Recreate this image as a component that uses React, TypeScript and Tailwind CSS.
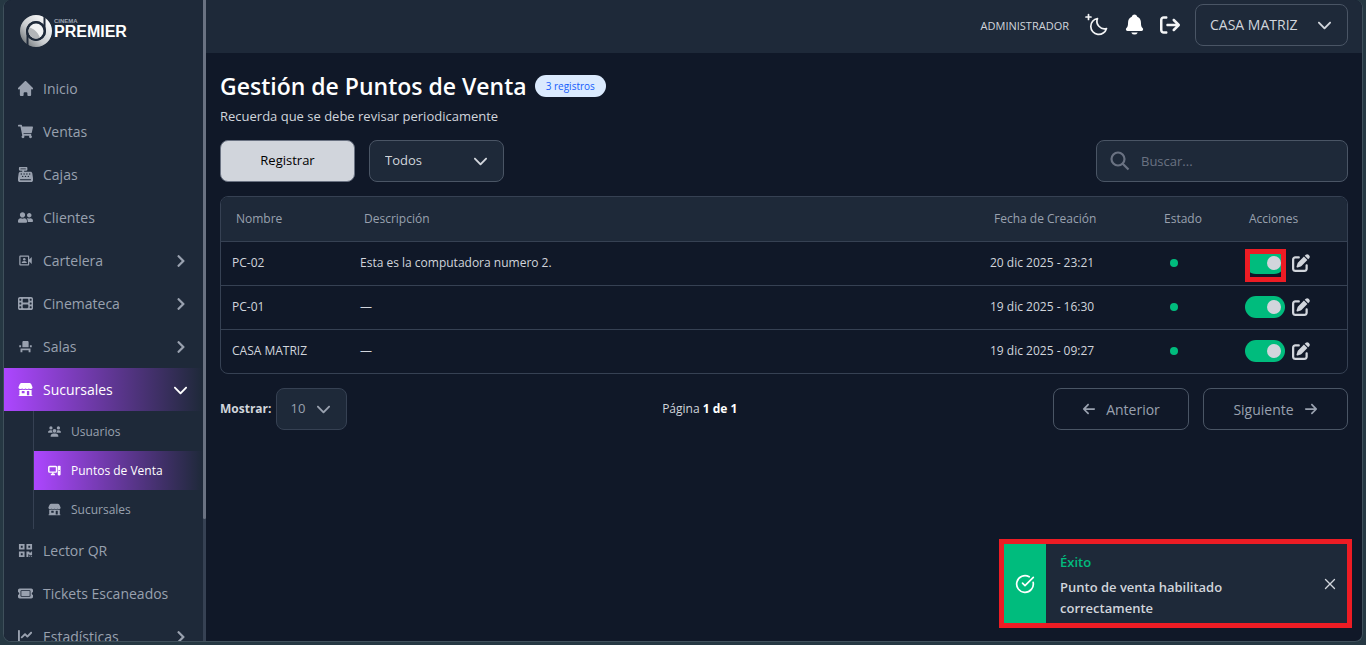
import { useState } from "react"
import type { IconType } from "react-icons"
import { FaArrowLeft, FaArrowRight, FaArrowRightFromBracket, FaCashRegister, FaChartLine, FaChevronDown, FaFilm, FaPenToSquare, FaTicket, FaUsers } from "react-icons/fa6"
import { FaChevronRight, FaQrcode, FaShoppingCart, FaUserFriends } from "react-icons/fa"
import { IoNotifications, IoStorefront } from "react-icons/io5"
import { MdEventSeat, MdOutlineVideoCameraFront } from "react-icons/md"
import { CircleCheckBig, X } from "lucide-react"

type Item = { label: string; icon: IconType; more?: boolean; active?: boolean }

const HomeIcon: IconType = ({ size = 15, className }) => (
  <svg width={size} height={size} viewBox="2 2 16 16" fill="currentColor" className={className}>
    <path d="M10.707 2.293a1 1 0 00-1.414 0l-7 7a1 1 0 001.414 1.414L4 10.414V17a1 1 0 001 1h2a1 1 0 001-1v-2a1 1 0 011-1h2a1 1 0 011 1v2a1 1 0 001 1h2a1 1 0 001-1v-6.586l.293.293a1 1 0 001.414-1.414l-7-7z" />
  </svg>
)

const ComputerIcon: IconType = ({ size = 14, className }) => (
  <svg width={size} height={size} viewBox="0 0 16 16" fill="none" stroke="currentColor" className={className}>
    <rect x="1" y="3" width="9.5" height="7" rx="1" strokeWidth="1.8" />
    <path d="M3.500 13h5M6 10v3" strokeWidth="1.8" />
    <rect x="12" y="2" width="3.5" height="12" rx="1" fill="currentColor" stroke="none" />
    <path d="M13 8h1.500" stroke="#8a40c8" strokeWidth="1" />
  </svg>
)

const topItems: Item[] = [
  { label: "Inicio", icon: HomeIcon },
  { label: "Ventas", icon: FaShoppingCart },
  { label: "Cajas", icon: FaCashRegister },
  { label: "Clientes", icon: FaUserFriends },
  { label: "Cartelera", icon: MdOutlineVideoCameraFront, more: true },
  { label: "Cinemateca", icon: FaFilm, more: true },
  { label: "Salas", icon: MdEventSeat, more: true },
]

const subItems: Item[] = [
  { label: "Usuarios", icon: FaUsers },
  { label: "Puntos de Venta", icon: ComputerIcon, active: true },
  { label: "Sucursales", icon: IoStorefront },
]

const bottomItems: Item[] = [
  { label: "Lector QR", icon: FaQrcode },
  { label: "Tickets Escaneados", icon: FaTicket },
  { label: "Estadísticas", icon: FaChartLine, more: true },
]

const initialRows = [
  { name: "PC-02", description: "Esta es la computadora numero 2.", date: "20 dic 2025 - 23:21", enabled: true, marked: true },
  { name: "PC-01", description: "—", date: "19 dic 2025 - 16:30", enabled: true, marked: false },
  { name: "CASA MATRIZ", description: "—", date: "19 dic 2025 - 09:27", enabled: true, marked: false },
]

const Logo = () => (
  <a href="#" className="ml-4 flex h-8 items-center gap-0.5 text-white">
    <svg width="32" height="32" viewBox="0 0 32 32" aria-hidden="true">
      <defs>
        <linearGradient id="ring" x1="0" y1="1" x2="1" y2="0">
          <stop offset="0" stopColor="#6f7478" />
          <stop offset="0.4" stopColor="#c9cccf" />
          <stop offset="1" stopColor="#ffffff" />
        </linearGradient>
      </defs>
      <circle cx="16" cy="16" r="13" fill="none" stroke="url(#ring)" strokeWidth="6" />
      <path d="M6.500 14v17H8.500V16zM23.500 1v15l2-1V3z" fill="#1e2939" />
      <circle cx="16" cy="16" r="10" fill="#1e2939" />
      <circle cx="16" cy="16" r="7.500" fill="#f1f2f3" />
      <path d="M9.500 12.500c4 1 8 4 10.500 10a7.500 7.500 0 0 1-10.500-10z" fill="#b3b6b9" />
    </svg>
    <span className="flex flex-col pb-1 font-['Liberation_Sans',sans-serif] font-bold">
      <span className="text-[6px] leading-[6px] text-gray-400">CINEMA</span>
      <span className="text-[16px] leading-[16px]">PREMIER</span>
    </span>
  </a>
)

const NavLink = ({ item }: { item: Item }) => {
  const Icon = item.icon
  return (
    <a href="#" className="flex h-[43px] shrink-0 items-center gap-2.5 pl-3.5 pr-[15px] text-[14px] text-gray-400">
      <Icon size={15} />
      <span className="flex-1 whitespace-nowrap">{item.label}</span>
      {item.more && <FaChevronRight size={14} />}
    </a>
  )
}

const Sidebar = () => (
  <aside className="flex w-[202px] shrink-0 overflow-hidden bg-gray-800">
    <div className="flex min-w-0 flex-1 flex-col overflow-hidden pt-[15px]">
      <Logo />
      <nav className="mt-5 flex flex-col">
        {topItems.map((item) => (
          <NavLink key={item.label} item={item} />
        ))}
        <button className="flex h-[43px] shrink-0 items-center gap-2.5 bg-linear-to-r from-purple-500 to-transparent pl-3.5 pr-[15px] text-left text-[14px] text-white">
          <IoStorefront size={15} />
          <span className="flex-1">Sucursales</span>
          <FaChevronDown size={15} />
        </button>
        <div className="ml-[29px] flex flex-col border-l border-gray-700 pt-px">
          {subItems.map(({ label, icon: Icon, active }) => (
            <a
              key={label}
              href="#"
              className={
                active
                  ? "flex h-[39px] items-center gap-2.5 bg-linear-to-r from-purple-500 to-transparent pl-3.5 text-[12px] text-white"
                  : "flex h-[39px] items-center gap-2.5 pl-3.5 text-[12px] text-gray-400"
              }
            >
              <Icon size={13} />
              <span className="whitespace-nowrap">{label}</span>
            </a>
          ))}
        </div>
        {bottomItems.map((item) => (
          <NavLink key={item.label} item={item} />
        ))}
      </nav>
    </div>
    <div className="w-[3px] bg-gray-700">
      <div className="h-[81%] rounded-b bg-gray-500" />
    </div>
  </aside>
)

const MoonIcon = () => (
  <svg width="24" height="24" viewBox="0 0 24 24" fill="none" stroke="currentColor" strokeWidth="1.7" strokeLinecap="round" strokeLinejoin="round">
    <path d="M12.500 5.500a8 8 0 1 0 9 10 7.500 7.500 0 0 1-9-10z" />
    <path d="M3.500 1.500v5M1 4h5" />
  </svg>
)

const Header = () => (
  <header className="flex h-[53px] shrink-0 items-center justify-end bg-gray-800 pb-1 pr-3.5 text-gray-100">
    <span className="pt-1 text-[11px] text-gray-300">ADMINISTRADOR</span>
    <button aria-label="Cambiar tema" className="ml-4">
      <MoonIcon />
    </button>
    <button aria-label="Notificaciones" className="ml-3.5 text-white">
      <IoNotifications size={23} />
    </button>
    <button aria-label="Cerrar sesión" className="ml-3.5">
      <FaArrowRightFromBracket size={20} />
    </button>
    <div className="relative ml-[15px]">
      <select aria-label="Sucursal" className="h-[42px] w-[153px] appearance-none rounded-lg border border-gray-600 bg-gray-800 px-3.5 text-[14px] text-gray-300">
        <option>CASA MATRIZ</option>
      </select>
      <FaChevronDown size={15} className="pointer-events-none absolute right-4 top-[13px] text-gray-300" />
    </div>
  </header>
)

const PointsTable = () => {
  const [rows, setRows] = useState(initialRows)

  const toggle = (name: string) => {
    setRows(rows.map((row) => (row.name === name ? { ...row, enabled: !row.enabled } : row)))
  }

  return (
    <div className="mt-3.5 overflow-hidden rounded-lg border border-gray-700">
      <table className="w-full table-fixed text-left text-[12px] text-gray-300">
        <thead>
          <tr className="h-11 border-b border-gray-700 bg-gray-800 text-gray-400">
            <th className="w-[128px] px-[15px] font-normal">Nombre</th>
            <th className="px-[15px] font-normal">Descripción</th>
            <th className="w-[170px] px-[15px] font-normal">Fecha de Creación</th>
            <th className="w-[85px] px-[15px] font-normal">Estado</th>
            <th className="w-[113px] px-[15px] font-normal">Acciones</th>
          </tr>
        </thead>
        <tbody>
          {rows.map((row) => (
            <tr key={row.name} className="h-11 border-b border-gray-700 last:border-b-0">
              <td className="px-[11px]">{row.name}</td>
              <td className="px-[11px]">{row.description}</td>
              <td className="px-[11px]">{row.date}</td>
              <td className="px-[21px]">
                <span className={row.enabled ? "block size-2 rounded-full bg-emerald-500" : "block size-2 rounded-full bg-gray-500"} />
              </td>
              <td className="px-[11px]">
                <div className="flex items-center gap-[7px]">
                  <div className="relative">
                    <input
                      type="checkbox"
                      aria-label={`Habilitar ${row.name}`}
                      checked={row.enabled}
                      onChange={() => toggle(row.name)}
                      className="block h-[22px] w-10 appearance-none rounded-full bg-gray-600 p-1 before:block before:size-3.5 before:rounded-full before:bg-gray-300 checked:bg-emerald-500 checked:before:ml-[18px]"
                    />
                    {row.marked && <span className="pointer-events-none absolute -top-[3px] left-0 h-[33px] w-[41px] border-5 border-[#ed1c24]" />}
                  </div>
                  <button aria-label={`Editar ${row.name}`}>
                    <FaPenToSquare size={18} />
                  </button>
                </div>
              </td>
            </tr>
          ))}
        </tbody>
      </table>
    </div>
  )
}

const Toast = () => (
  <div role="status" className="absolute bottom-[13px] right-2.5 flex w-[353px] border-5 border-[#ed1c24] bg-gray-800">
    <div className="flex w-[42px] items-center justify-center bg-emerald-500 text-white">
      <CircleCheckBig size={20} />
    </div>
    <div className="flex-1 px-3.5 pt-2 pb-1 text-[13px] leading-[21px] font-semibold text-gray-300">
      <p className="mb-1 text-emerald-500">Éxito</p>
      <p className="w-[200px]">Punto de venta habilitado correctamente</p>
    </div>
    <button aria-label="Cerrar" className="pr-2 text-gray-300">
      <X size={18} strokeWidth={1.8} />
    </button>
  </div>
)

export default function App() {
  return (
    <div className="h-screen overflow-hidden bg-[#263843] px-[3px] pb-[3px] font-['Open_Sans','Noto_Sans',sans-serif]">
      <div className="relative flex h-full overflow-hidden rounded-lg border border-t-0 border-[#3f505b] bg-gray-900">
        <Sidebar />
        <div className="flex min-w-0 flex-1 flex-col">
          <Header />
          <main className="px-3.5 pt-[17px]">
            <div className="flex items-center gap-2">
              <h1 className="text-[23px] leading-8 font-semibold text-white">Gestión de Puntos de Venta</h1>
              <span className="rounded-full bg-blue-100 px-[11px] text-[10px] leading-[22px] text-blue-600">3 registros</span>
            </div>
            <p className="mt-0.5 text-[13px] leading-6 text-gray-300">Recuerda que se debe revisar periodicamente</p>
            <div className="mt-3 flex gap-3.5 text-[13px]">
              <button className="h-[42px] w-[135px] rounded-lg border border-gray-500 bg-gray-300 text-black">Registrar</button>
              <div className="relative">
                <select aria-label="Estado" className="h-[42px] w-[135px] appearance-none rounded-lg border border-gray-600 bg-gray-800 px-[15px] text-gray-300">
                  <option>Todos</option>
                </select>
                <FaChevronDown size={15} className="pointer-events-none absolute right-4 top-[13px] text-gray-300" />
              </div>
              <div className="relative ml-auto">
                <svg width="20" height="20" viewBox="0 0 20 20" fill="none" stroke="currentColor" strokeWidth="2.200" className="absolute left-3.5 top-[11px] text-gray-500">
                  <circle cx="8" cy="8" r="6.500" />
                  <path d="M12.500 12.500l6 6" />
                </svg>
                <input type="search" aria-label="Buscar" placeholder="Buscar..." className="h-[42px] w-[252px] rounded-lg border border-gray-600 bg-gray-800 pl-11 pr-3 text-gray-300 placeholder:text-gray-500" />
              </div>
            </div>
            <PointsTable />
            <div className="mt-3.5 flex items-center justify-between text-[12px] text-gray-300">
              <div className="flex items-center gap-1">
                <label htmlFor="page-size" className="font-bold">Mostrar:</label>
                <div className="relative text-gray-400">
                  <select id="page-size" className="h-[42px] w-[71px] appearance-none rounded-lg border border-gray-700 bg-gray-800 px-3.5 text-[13px]">
                    <option>10</option>
                  </select>
                  <FaChevronDown size={15} className="pointer-events-none absolute right-4 top-[13px]" />
                </div>
              </div>
              <p>
                Página <strong className="text-white">1 de 1</strong>
              </p>
              <div className="flex gap-3.5 text-[14px] text-gray-400">
                <button className="flex h-[42px] w-[136px] items-center justify-center gap-2.5 rounded-lg border border-gray-600">
                  <FaArrowLeft size={14} /> Anterior
                </button>
                <button className="flex h-[42px] w-[145px] items-center justify-center gap-2.5 rounded-lg border border-gray-600">
                  Siguiente <FaArrowRight size={14} />
                </button>
              </div>
            </div>
          </main>
        </div>
        <Toast />
      </div>
    </div>
  )
}
